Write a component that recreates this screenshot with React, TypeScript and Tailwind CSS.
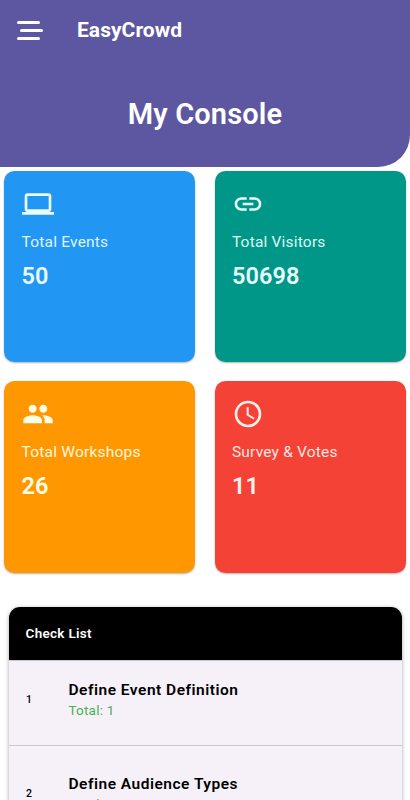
import type { ReactNode } from "react";

const icon = "size-8 shrink-0 fill-current";

const LaptopIcon = () => (
  <svg viewBox="0 0 24 24" className={icon}>
    <path d="M20 18c1.1 0 1.99-.9 1.99-2L22 6c0-1.1-.9-2-2-2H4c-1.1 0-2 .9-2 2v10c0 1.1.9 2 2 2H0v2h24v-2h-4zM4 6h16v10H4V6z" />
  </svg>
);

const LinkIcon = () => (
  <svg viewBox="0 0 24 24" className={icon}>
    <path d="M3.9 12c0-1.71 1.39-3.1 3.1-3.1h4V7H7c-2.76 0-5 2.24-5 5s2.24 5 5 5h4v-1.9H7c-1.71 0-3.1-1.39-3.1-3.1zM8 13h8v-2H8v2zm9-6h-4v1.9h4c1.71 0 3.1 1.39 3.1 3.1s-1.39 3.1-3.1 3.1h-4V17h4c2.76 0 5-2.24 5-5s-2.24-5-5-5z" />
  </svg>
);

const PeopleIcon = () => (
  <svg viewBox="0 0 24 24" className={icon}>
    <path d="M16 11c1.66 0 2.99-1.34 2.99-3S17.66 5 16 5c-1.66 0-3 1.34-3 3s1.34 3 3 3zm-8 0c1.66 0 2.99-1.34 2.99-3S9.66 5 8 5C6.34 5 5 6.34 5 8s1.34 3 3 3zm0 2c-2.33 0-7 1.17-7 3.5V19h14v-2.5c0-2.33-4.67-3.5-7-3.5zm8 0c-.29 0-.62.02-.97.05 1.16.84 1.97 1.97 1.97 3.45V19h6v-2.5c0-2.33-4.67-3.5-7-3.5z" />
  </svg>
);

const ClockIcon = () => (
  <svg viewBox="0 0 24 24" className={icon}>
    <path d="M11.99 2C6.47 2 2 6.48 2 12s4.47 10 9.99 10C17.52 22 22 17.52 22 12S17.52 2 11.99 2zM12 20c-4.42 0-8-3.58-8-8s3.58-8 8-8 8 3.58 8 8-3.58 8-8 8zm.5-13H11v6l5.25 3.15.75-1.23-4.5-2.67z" />
  </svg>
);

type StatProps = {
  color: string;
  tint: string;
  icon: ReactNode;
  label: string;
  value: string;
};

function StatCard({ color, tint, icon, label, value }: StatProps) {
  return (
    <div
      className={`flex h-[191.3px] flex-col rounded-[10.5px] pt-[16.7px] pl-[17.3px] shadow-[0_1px_2px_rgba(0,0,0,0.3)] ${color} ${tint}`}
    >
      {icon}
      <div className="mt-[12.4px] text-[15.5px] leading-[20px] tracking-[0.2px] whitespace-nowrap opacity-95">{label}</div>
      <div className="mt-[10px] text-[23.5px] leading-[28px] font-semibold tracking-[0.1px]">{value}</div>
    </div>
  );
}

function CheckRow({ index, title, total, className }: { index: number; title: string; total: number; className: string }) {
  return (
    <div className={`flex border-t border-[#cbc8cd] pl-[17.5px] ${className}`}>
      <div className="w-[42.5px] pt-[12px] text-[10.5px] leading-[16px] font-medium">{index}</div>
      <div>
        <div className="text-[15.5px] leading-[20px] font-semibold tracking-[0.5px]">{title}</div>
        <div className="mt-[1px] text-[13.5px] leading-[18px] tracking-[0.2px] text-[#4caf50]">Total: {total}</div>
      </div>
    </div>
  );
}

export default function App() {
  return (
    <div className="h-[800px] w-[410px] overflow-hidden bg-white font-['Roboto',sans-serif] text-black">
      <header className="h-[166.5px] rounded-br-[32px] bg-[#5d56a1] text-white">
        <div className="flex h-[60px] items-center pl-[17px]">
          <div className="flex w-[60px] flex-col gap-[5px]">
            <div className="h-[3px] w-[23px] rounded-full bg-white" />
            <div className="ml-[3px] h-[3px] w-[23px] rounded-full bg-white" />
            <div className="h-[3px] w-[23px] rounded-full bg-white" />
          </div>
          <div className="text-[21px] leading-[28px] font-bold tracking-[0.05px]">EasyCrowd</div>
        </div>
        <h1 className="mt-[36px] text-center text-[29px] leading-[36px] font-semibold tracking-[0.15px]">My Console</h1>
      </header>

      <main>
        <div className="grid grid-cols-2 gap-x-[19.2px] gap-y-[19.1px] px-[4.3px] pt-[4.5px]">
          <StatCard color="bg-[#2196f3]" tint="text-[#e9fbff]" icon={<LaptopIcon />} label="Total Events" value="50" />
          <StatCard color="bg-[#009688]" tint="text-[#e6fffb]" icon={<LinkIcon />} label="Total Visitors" value="50698" />
          <StatCard color="bg-[#ff9800]" tint="text-[#fffde6]" icon={<PeopleIcon />} label="Total Workshops" value="26" />
          <StatCard color="bg-[#f44336]" tint="text-[#ffefeb]" icon={<ClockIcon />} label="Survey & Votes" value="11" />
        </div>

        <section className="mx-[8.5px] mt-[34.2px] h-[260px] overflow-hidden rounded-[11px] bg-[#f6f1f8] shadow-[0_1px_4px_rgba(0,0,0,0.35)]">
          <div className="flex h-[53px] items-center bg-black pl-[17px] text-[13.5px] font-semibold tracking-[0.3px] text-white">
            Check List
          </div>
          <CheckRow index={1} title="Define Event Definition" total={1} className="h-[85.5px] pt-[19px]" />
          <CheckRow index={2} title="Define Audience Types" total={1} className="h-[104px] pt-[27.5px]" />
        </section>
      </main>
    </div>
  );
}
